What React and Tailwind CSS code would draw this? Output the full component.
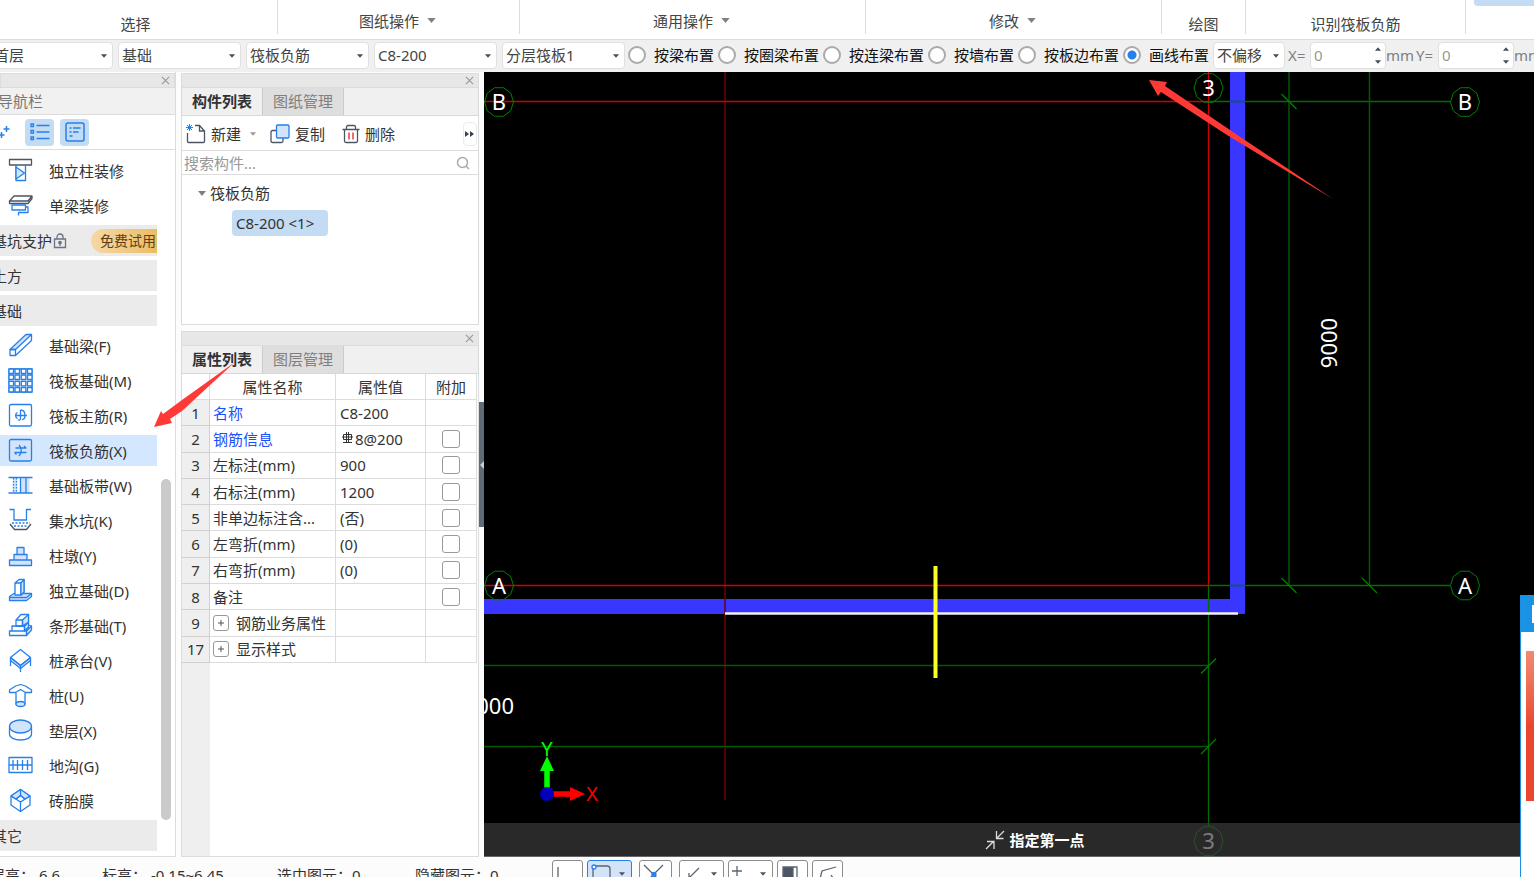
import React, { useState } from 'react';

const RIBBON = [
  { label: '图纸操作', menu: true, width: 'w-[242px]' },
  { label: '通用操作', menu: true, width: 'w-[346px]' },
  { label: '修改', menu: true, width: 'w-[296px]' },
  { label: '绘图', width: 'w-[84px]' },
  { label: '识别筏板负筋', width: 'w-[220px]' },
];

const COMBOS = [
  { name: '楼层', value: '首层' },
  { name: '构件大类', value: '基础' },
  { name: '构件类型', value: '筏板负筋' },
  { name: '构件名称', value: 'C8-200' },
  { name: '分层', value: '分层筏板1' },
];

const LAYOUT_MODES = ['按梁布置', '按圈梁布置', '按连梁布置', '按墙布置', '按板边布置', '画线布置'];

const NAV = [
  { type: 'item', label: '独立柱装修', icon: 'columnFinish' },
  { type: 'item', label: '单梁装修', icon: 'beamFinish' },
  { type: 'group', label: '基坑支护', trial: true },
  { type: 'group', label: '土方' },
  { type: 'group', label: '基础' },
  { type: 'item', label: '基础梁(F)', icon: 'beam' },
  { type: 'item', label: '筏板基础(M)', icon: 'raft' },
  { type: 'item', label: '筏板主筋(R)', icon: 'mainBar' },
  { type: 'item', label: '筏板负筋(X)', icon: 'negBar' },
  { type: 'item', label: '基础板带(W)', icon: 'strip' },
  { type: 'item', label: '集水坑(K)', icon: 'sump' },
  { type: 'item', label: '柱墩(Y)', icon: 'pier' },
  { type: 'item', label: '独立基础(D)', icon: 'pad' },
  { type: 'item', label: '条形基础(T)', icon: 'stripFooting' },
  { type: 'item', label: '桩承台(V)', icon: 'pileCap' },
  { type: 'item', label: '桩(U)', icon: 'pile' },
  { type: 'item', label: '垫层(X)', icon: 'cushion' },
  { type: 'item', label: '地沟(G)', icon: 'trench' },
  { type: 'item', label: '砖胎膜', icon: 'brick' },
  { type: 'group', label: '其它' },
];

const PROPS = [
  { no: 1, name: '名称', value: 'C8-200', key: true },
  { no: 2, name: '钢筋信息', value: '8@200', key: true, rebar: true, extra: true },
  { no: 3, name: '左标注(mm)', value: '900', extra: true },
  { no: 4, name: '右标注(mm)', value: '1200', extra: true },
  { no: 5, name: '非单边标注含...', value: '(否)', extra: true },
  { no: 6, name: '左弯折(mm)', value: '(0)', extra: true },
  { no: 7, name: '右弯折(mm)', value: '(0)', extra: true },
  { no: 8, name: '备注', value: '', extra: true },
  { no: 9, name: '钢筋业务属性', value: '', expand: true },
  { no: 17, name: '显示样式', value: '', expand: true },
];

const G = '#4b5563';
const F = '#d3e4fa';

const ICONS = {
  columnFinish: (
    <>
      <path d="M1.5 1.5h22v5.5h-22z" stroke={G} />
      <path d="M8 7v15.5h9.5V7" />
      <path d="M8 9l8.5 6L8 21z" fill={F} />
    </>
  ),
  beamFinish: (
    <>
      <path d="M1.5 8L6 3h18l-4 5zM1.5 8v2.5H20L24 5.5V3" stroke={G} />
      <path d="M4 12h13.5v5H4zM17.5 14H20v5.5h-9.5v3" />
    </>
  ),
  beam: (
    <>
      <path d="M2 16.5L18 1.5h5.5L7.5 16.5z" fill={F} />
      <path d="M2 16.5h5.5v6H2zM23.5 1.5v6l-16 15" />
    </>
  ),
  raft: (
    <>
      <path d="M1 1h23v23H1z" fill={F} />
      {[1, 7, 13.3, 19.5].map((y) =>
        [1, 7, 13.3, 19.5].map((x) => <rect key={`${x}-${y}`} x={x} y={y} width="4.5" height="4.5" fill="#fff" />)
      )}
    </>
  ),
  mainBar: (
    <>
      <rect x="1.5" y="1.5" width="22" height="21.5" rx="1.5" />
      <path d="M12.5 7v8.500c0 2-2 2-2.500 1M7 12.500h12M9.500 9.500c-2.500 1-2.500 5 0 6M12.500 7c3 0 4.500 2 4.500 5.500s-1.500 4-3 4" />
    </>
  ),
  negBar: (
    <>
      <rect x="1.5" y="1.5" width="22" height="21.5" rx="1.5" fill={F} />
      <path d="M7.500 10H18l-2-2M6.500 14.500h12M6.500 14.500l2 2M11 7c3 3 3 8 0 11" />
    </>
  ),
  strip: (
    <>
      <path d="M13 5h8.5v15H13zM5 5h4v15H5z" fill={F} stroke="none" />
      <path d="M.5 4.5h24M.5 20h24M12.500 4.5V20M18 4.500V20" />
      <path d="M5.500 5v15M8.500 5v15" strokeDasharray="1.5 1.5" />
    </>
  ),
  sump: (
    <>
      <path d="M1.5 1.5H6V12h12.5V1.5H23" />
      <path d="M4 15h18M6 18h14" strokeDasharray="2 1.5" />
      <path d="M2 16l4.5 5.5h12L23 16" stroke={G} />
    </>
  ),
  pier: <path d="M1.5 17h22v5.5h-22zM6 11.5h13V17H6zM9 4.5h7v7H9z" fill={F} />,
  pad: (
    <>
      <path d="M1.5 18.5L6 15.5h17.5v3l-5 4h-17z" fill={F} />
      <path d="M7 17V5l4-3.500h5V14l-3 3zM7 5h6v12" fill="#fff" />
      <path d="M13 5l3-3.500V14l-3 3z" fill={F} />
      <path d="M1.5 19.5h17l5-4" />
    </>
  ),
  stripFooting: (
    <>
      <path d="M18.500 18l5-5v4l-5 5.500zM16.500 13l4-4v5l-4 4z" fill={F} />
      <path d="M1.5 18h17v4.5h-17zM4 13h12.500v5H4z" />
      <path d="M8 13V7l5-5.500h7.500V9l-4 4z" />
      <path d="M14.500 7l6-5.500V9l-6 4z" fill={F} />
      <path d="M8 7h6.500v6M20.500 12l3 1" />
    </>
  ),
  pileCap: (
    <>
      <path d="M2.5 9.5v3l10 8 10-8v-3l-10 8z" fill={F} />
      <path d="M12.500 1.500l10 8-10 8-10-8zM2.500 12v6M22.500 12v6M12.500 18v6" />
    </>
  ),
  pile: (
    <>
      <path d="M1.5 7l6-4 5-1.500 5 1.500 6 4v2.500h-6l-5-3-5 3h-6zM8 10v11.500M17 10v11.500" />
      <ellipse cx="12.5" cy="21" rx="4.5" ry="2.5" fill={F} />
    </>
  ),
  cushion: (
    <>
      <path d="M1.5 9v7c0 3.5 5 6 11 6s11-2.5 11-6V9" />
      <ellipse cx="12.5" cy="8.5" rx="11" ry="6.5" fill={F} />
    </>
  ),
  trench: <path d="M1 4.5h23v15H1zM5 7v10M9.500 7v10M14.500 7v10M19.500 7v10M1 12h23" />,
  brick: (
    <>
      <path d="M12.5 1.5l9.500 6.500v9l-9.500 6.500L3 17V8z" />
      <path d="M12.500 1.500L3 8l5 3 4.500-3.500 4.500 3.500 5-3z" fill={F} />
      <path d="M8 11l4.500-3.500L17 11l-4.500 3zM3 8l9.500 6L22 8M12.500 14v9.500M12.500 1.500v6" />
    </>
  ),
};

function NavIcon({ name }) {
  return (
    <svg viewBox="0 0 25 25" className="h-[25px] w-[25px] shrink-0" fill="none" stroke="#2680eb" strokeWidth="1.3" strokeLinejoin="round">
      {ICONS[name]}
    </svg>
  );
}

function Caret({ className }) {
  return (
    <svg viewBox="0 0 10 6" className={className} fill="currentColor" aria-hidden="true">
      <path d="M0 0h10L5 6z" />
    </svg>
  );
}

function Combo({ name, value, width }) {
  return (
    <div className={`relative shrink-0 ${width}`}>
      <select
        aria-label={name}
        defaultValue={value}
        className="h-[27px] w-full appearance-none rounded border border-[#e0e0e0] bg-white pl-[3px] text-[15px] leading-[25px] text-[#444] outline-none"
      >
        <option>{value}</option>
      </select>
      <Caret className="pointer-events-none absolute top-[12px] right-[6px] h-1 w-[6px] text-[#444b59]" />
    </div>
  );
}

function Offset({ axis }) {
  return (
    <label className="flex shrink-0 items-center text-[#808080]">
      <span className="w-[22px]">{axis}=</span>
      <span className="relative">
        <input
          type="text"
          defaultValue="0"
          className="h-[27px] w-[76px] rounded border border-[#e0e0e0] bg-white pl-[3px] text-[15px] text-[#999] outline-none"
        />
        <Caret className="absolute top-[5px] right-[5px] h-1 w-[6px] rotate-180 text-[#444b59]" />
        <Caret className="absolute right-[5px] bottom-[5px] h-1 w-[6px] text-[#444b59]" />
      </span>
      <span className="w-[30px]">mm</span>
    </label>
  );
}

function Ribbon() {
  return (
    <header className="relative flex h-10 shrink-0 border-b border-[#dcdcdc] bg-white text-[#444]">
      <div className="-ml-[6px] flex h-[34px] w-[284px] shrink-0 items-end justify-center border-r border-[#dcdcdc] leading-5">选择</div>
      {RIBBON.map((g) => (
        <div key={g.label} className={`flex h-[34px] shrink-0 justify-center border-r border-[#dcdcdc] leading-5 ${g.width} ${g.menu ? 'items-center pt-[7px] pr-[2px]' : 'items-end'}`}>
          {g.menu ? (
            <button className="flex items-center gap-2">
              {g.label}
              <Caret className="h-[5px] w-[9px] text-[#808080]" />
            </button>
          ) : (
            g.label
          )}
        </div>
      ))}
      <div className="ml-2 h-[6px] grow rounded-bl bg-[#c3dbf3]" />
    </header>
  );
}

function OptionsBar() {
  const [mode, setMode] = useState('画线布置');
  return (
    <div className="flex h-8 shrink-0 items-center overflow-hidden bg-[#f0f0f0] pb-[2px]">
      <div className="-ml-[10px] flex gap-[5px]">
        {COMBOS.map((c) => (
          <Combo key={c.name} {...c} width="w-[123px]" />
        ))}
      </div>
      <div className="ml-[3px] flex gap-1 pr-1">
        {LAYOUT_MODES.map((m) => (
          <label key={m} className="flex shrink-0 items-center gap-2 text-[#111]">
            <input
              type="radio"
              name="mode"
              checked={mode === m}
              onChange={() => setMode(m)}
              className="h-[18px] w-[18px] appearance-none rounded-full border-2 border-[#aaa] bg-white checked:bg-[radial-gradient(circle,#2680eb_4px,#fff_5px)]"
            />
            {m}
          </label>
        ))}
      </div>
      <Combo name="偏移方式" value="不偏移" width="w-[72px]" />
      <div className="ml-[3px] flex">
        <Offset axis="X" />
        <Offset axis="Y" />
      </div>
    </div>
  );
}

function CloseStrip() {
  return (
    <div className="flex h-[15px] shrink-0 items-center justify-end border border-[#dcdcdc] bg-[#e7e7e7] pr-1">
      <button aria-label="关闭">
        <svg viewBox="0 0 10 10" className="h-[9px] w-[9px]" stroke="#999" strokeWidth="1.3">
          <path d="M1 1l8 8M9 1L1 9" />
        </svg>
      </button>
    </div>
  );
}

function Navigator() {
  const [active, setActive] = useState('negBar');
  return (
    <nav className="flex w-[176px] shrink-0 flex-col border-r border-b border-[#dcdcdc] bg-white pt-px">
      <CloseStrip />
      <h2 className="-ml-px h-[27px] shrink-0 border-b border-[#dcdcdc] bg-[#f1f1f1] leading-[26px] text-[#777]">
        <span className="-ml-px">导航栏</span>
      </h2>
      <div className="flex h-[35px] shrink-0 items-center gap-[6px] border-b border-[#dcdcdc]">
        <button aria-label="添加" className="w-[19px]">
          <svg viewBox="0 0 19 24" className="h-6 w-[19px]" stroke="#2680eb" strokeWidth="1.5">
            <path d="M6.5 6v6M3.5 9h6M1.5 12v6M-1.5 15h6" />
          </svg>
        </button>
        <button aria-label="列表" className="flex h-[27px] w-[29px] items-center justify-center rounded bg-[#c3dbf3]">
          <svg viewBox="0 0 20 18" className="h-[18px] w-5" fill="none" stroke="#2680eb" strokeWidth="1.3">
            <path d="M6.500 2.500h13M6.500 9h13M6.500 15.500h13M1 1h2.500v2.500H1zM1 7.500h2.500V10H1zM1 14h2.500v2.500H1z" />
          </svg>
        </button>
        <button aria-label="图标" className="flex h-[27px] w-[29px] items-center justify-center rounded bg-[#c3dbf3]">
          <svg viewBox="0 0 20 20" className="h-5 w-5" fill="none" stroke="#2680eb" strokeWidth="1.5">
            <rect x="1" y="1" width="18" height="18" rx="2" />
            <path d="M4.500 6h2M8 6h7.500M4.500 10h2M8 10h5.500M4.500 14h3" />
          </svg>
        </button>
      </div>
      <div className="flex min-h-0 grow justify-between overflow-hidden pt-[5px]">
        <ul className="flex w-[157px] flex-col gap-1">
          {NAV.map((n) =>
            n.type === 'group' ? (
              <li key={n.label} className="flex h-[31px] shrink-0 items-center overflow-hidden bg-[#ebebeb] text-[#333]">
                <span className="-ml-2 shrink-0">{n.label}</span>
                {n.trial && (
                  <>
                    <svg viewBox="0 0 14 16" className="ml-px h-4 w-[14px] shrink-0" fill="none" stroke="#6b7280" strokeWidth="1.3">
                      <path d="M1.5 6h11v8.5h-11zM4 6V4a3 3 0 016 0v2M7 11v2" />
                      <circle cx="7" cy="9.5" r="1.2" fill="#6b7280" />
                    </svg>
                    <span className="ml-6 h-6 grow rounded-l-full bg-linear-to-r from-[#f5d8a8] to-[#ebbd62] pl-[9px] text-[14px] leading-6 whitespace-nowrap text-[#5e3f14]">
                      免费试用
                    </span>
                  </>
                )}
              </li>
            ) : (
              <li key={n.label} className="shrink-0">
                <button
                  onClick={() => setActive(n.icon)}
                  className={`flex h-[31px] w-full items-center gap-4 pl-2 text-[#333] ${active === n.icon ? 'bg-[#d3e7ff]' : ''}`}
                >
                  <NavIcon name={n.icon} />
                  {n.label}
                </button>
              </li>
            )
          )}
        </ul>
        <div className="mr-1 flex w-[10px] flex-col justify-end pb-[36px]">
          <div className="h-[341px] rounded-full bg-[#cacaca]" />
        </div>
      </div>
    </nav>
  );
}

function Tabs({ items }) {
  return (
    <div className="flex h-7 shrink-0 border-x border-b border-[#d5d8dc] bg-[#f0f0f0]" role="tablist">
      {items.map((t, i) => (
        <button
          key={t}
          role="tab"
          aria-selected={i === 0}
          className={`w-[81px] border-r border-[#c9cdd2] pb-px text-center ${i === 0 ? 'bg-[#f0f0f0] font-bold text-[#333]' : 'bg-[#dedede] text-[#808080]'}`}
        >
          {t}
        </button>
      ))}
    </div>
  );
}

function ComponentPanel() {
  return (
    <section className="flex h-[252px] shrink-0 flex-col border-b border-[#dcdcdc] bg-white">
      <CloseStrip />
      <Tabs items={['构件列表', '图纸管理']} />
      <div className="flex h-[35px] shrink-0 items-center border-x border-b border-[#dcdcdc] pt-px pl-1 text-[#333]">
        <button className="flex items-center gap-[5px]">
          <svg viewBox="0 0 20 20" className="h-5 w-5" fill="none" stroke="#4b5563" strokeWidth="1.3">
            <path d="M1.5 9v8.5a1 1 0 001 1h15a1 1 0 001-1V7l-5-5.500H9M13.500 1.500V7h5" />
            <path d="M1 1l5 5M6 1L1 6M3.500 0v7M0 3.500h7" stroke="#2680eb" strokeWidth="1" />
          </svg>
          新建
        </button>
        <Caret className="ml-[9px] h-1 w-[6px] text-[#999]" />
        <button className="ml-[14px] flex items-center gap-[5px]">
          <svg viewBox="0 0 20 20" className="h-5 w-5" fill="none" strokeWidth="1.3">
            <rect x="1" y="6.5" width="12" height="12" rx="1.5" stroke="#4b5563" />
            <rect x="6.5" y="1" width="12.5" height="13" rx="1" stroke="#2680eb" fill={F} />
          </svg>
          复制
        </button>
        <button className="ml-[17px] flex items-center gap-[5px]">
          <svg viewBox="0 0 18 20" className="h-5 w-[18px]" fill="none" stroke="#4b5563" strokeWidth="1.3">
            <path d="M.5 5.5h17M2.5 5.5v11.500a1.500 1.500 0 001.500 1.500h10a1.500 1.500 0 001.500-1.500V5.500M4.500 5.500V3a1.500 1.500 0 011.500-1.500h6A1.500 1.500 0 0113.500 3v2.500" />
            <path d="M7 8.500v7M11 8.500v7" stroke="#e02020" />
          </svg>
          删除
        </button>
        <button aria-label="更多" className="mr-px ml-auto flex h-6 w-[14px] items-center justify-center rounded border border-[#ececec]">
          <svg viewBox="0 0 10 6" className="h-[6px] w-[10px] shrink-0" fill="#374151">
            <path d="M0 0l4 3-4 3zM5 0l4 3-4 3z" />
          </svg>
        </button>
      </div>
      <div className="flex h-6 shrink-0 items-center border-x border-b border-[#dcdcdc] pr-2 pl-[2px]">
        <input type="search" aria-label="搜索构件" placeholder="搜索构件..." className="w-0 grow text-[15px] leading-5 outline-none placeholder:text-[#999]" />
        <svg viewBox="0 0 14 14" className="h-[14px] w-[14px]" fill="none" stroke="#aaa" strokeWidth="1.5">
          <circle cx="6.5" cy="6.5" r="5" />
          <path d="M10 10l3 3" />
        </svg>
      </div>
      <ul className="grow border-x border-[#dcdcdc] pt-[7px] text-[#333]">
        <li>
          <div className="flex h-[22px] items-center gap-1 pl-4">
            <Caret className="h-[5px] w-[8px] text-[#808080]" />
            筏板负筋
          </div>
          <ul className="pt-[6px] pl-[50px]">
            <li className="h-[26px] w-24 rounded bg-[#c3dbf3] pl-1 leading-[26px]">{'C8-200 <1>'}</li>
          </ul>
        </li>
      </ul>
    </section>
  );
}

function PropertyPanel() {
  return (
    <section className="flex min-h-0 grow flex-col border-b border-[#dcdcdc] bg-white">
      <CloseStrip />
      <Tabs items={['属性列表', '图层管理']} />
      <div className="flex min-h-0 grow flex-col border-x border-[#dcdcdc] pr-px">
        <table className="h-[289px] w-full shrink-0 table-fixed border-separate border-spacing-0 text-[#333]">
          <thead>
            <tr className="h-[26px]">
              <th className="w-7 border-r border-b border-[#dcdcdc]" />
              <th className="border-r border-b border-[#dcdcdc] p-0 font-normal">属性名称</th>
              <th className="w-[90px] border-r border-b border-[#dcdcdc] p-0 font-normal">属性值</th>
              <th className="w-[51px] border-r border-b border-[#dcdcdc] p-0 font-normal">附加</th>
            </tr>
          </thead>
          <tbody>
            {PROPS.map((p) => (
              <tr key={p.no} className="h-[26px]">
                <td className="border-r border-b border-[#d0d0d0] bg-[#efefef] p-0 text-center">{p.no}</td>
                <td className={`border-r border-b border-[#dcdcdc] p-0 pl-[3px] ${p.key ? 'text-[#1a50ff]' : ''}`}>
                  <div className="flex items-center gap-[7px]">
                    {p.expand && (
                      <button aria-label="展开" className="flex h-4 w-4 items-center justify-center rounded-[3px] border border-[#999]">
                        <svg viewBox="0 0 8 8" className="h-2 w-2 shrink-0" stroke="#555">
                          <path d="M4 1v6M1 4h6" />
                        </svg>
                      </button>
                    )}
                    {p.name}
                  </div>
                </td>
                <td className="border-r border-b border-[#dcdcdc] p-0 pl-1">
                  <div className="flex items-center gap-px">
                    {p.rebar && (
                      <svg viewBox="0 0 14 14" className="h-[14px] w-[14px]" fill="none" stroke="#333">
                        <path d="M3.5 2.500v5M6.500 0v11M8.500 0v11M11.500 2.500v5M3 10.500h9M3.500 2.500h8M3.500 7.500h8M2 5h11" />
                      </svg>
                    )}
                    {p.value}
                  </div>
                </td>
                <td className="border-r border-b border-[#dcdcdc] p-0">
                  {p.extra && (
                    <input type="checkbox" aria-label={`${p.name} 附加`} className="mx-auto block h-[18px] w-[18px] appearance-none rounded-[3px] border border-[#999] bg-white" />
                  )}
                </td>
              </tr>
            ))}
          </tbody>
        </table>
        <div className="w-7 grow bg-[#efefef]" />
      </div>
    </section>
  );
}

function AxisBubble({ x, y, label }) {
  const pts = Array.from({ length: 10 }, (_, i) => {
    const a = (i * Math.PI) / 5;
    return `${x + 14.5 * Math.cos(a)},${y + 15 * Math.sin(a)}`;
  }).join(' ');
  return (
    <g>
      <polygon points={pts} fill="none" stroke="#008000" />
      <text x={x} y={y + 8} fill="#fff" fontSize="22" textAnchor="middle">{label}</text>
    </g>
  );
}

function Drawing() {
  return (
    <svg viewBox="484 72 1050 785" preserveAspectRatio="xMinYMin slice" className="h-full w-full" fill="none">
      {/* walls */}
      <path d="M484 606.5H1237.5V72" stroke="#3936ff" strokeWidth="15" />
      {/* grid lines */}
      <path d="M725 72V800" stroke="#6e0000" strokeWidth="1.5" />
      <path d="M484 101.5H1208.5M1208.5 72V585.5M484 585.5H1208.5" stroke="#d00000" strokeWidth="1.3" />
      <path d="M1208.5 101.5H1450M1208.5 585.5H1450M1208.5 585.5V826" stroke="#006e00" strokeWidth="1.3" />
      {/* dimension lines */}
      <path d="M1289 72V585.5M1369.5 72V585.5M484 665.5H1208.5M484 746.5H1208.5" stroke="#005a00" strokeWidth="1.5" />
      <path d="M1281.5 94l15 15M1281.5 578l15 15M1362 578l15 15M1201 673.500l15-15M1201 754l15-15" stroke="#008000" strokeWidth="1.3" />
      {/* selected edge and negative bar */}
      <path d="M725 613.500H1238" stroke="#f4f0ff" strokeWidth="2.500" />
      <path d="M935.500 566V678" stroke="#ffff28" strokeWidth="4" />
      <AxisBubble x={499} y={102} label="B" />
      <AxisBubble x={1465} y={102} label="B" />
      <AxisBubble x={499} y={585.5} label="A" />
      <AxisBubble x={1465} y={585.5} label="A" />
      <AxisBubble x={1208.5} y={88} label="3" />
      <AxisBubble x={1208.5} y={841} label="3" />
      <text x="514" y="714" fill="#fff" fontSize="22" textAnchor="end">9000</text>
      <text transform="translate(1337 343) rotate(-90)" fill="#fff" fontSize="22" textAnchor="middle">9000</text>
      {/* axes */}
      <path d="M547 790V770" stroke="#0f0" strokeWidth="5.5" />
      <path d="M540 771h14l-7-15z" fill="#0f0" />
      <path d="M550 794h21" stroke="#f00" strokeWidth="5.5" />
      <path d="M570 787v14l15-7z" fill="#f00" />
      <circle cx="547" cy="794" r="7" fill="#0000b8" />
      <text x="547" y="756" fill="#0f0" fontSize="20" textAnchor="middle">Y</text>
      <text x="592" y="801" fill="#f00" fontSize="20" textAnchor="middle">X</text>
      {/* pointer to the active layout mode */}
      <path d="M1149 80l18 2-2 4 68 46 100 67-106-64-66-43-3 4z" fill="#ff3a36" />
    </svg>
  );
}

function Canvas() {
  return (
    <main className="relative min-w-0 grow overflow-hidden border-b border-[#666] bg-black">
      <Drawing />
      <div className="absolute inset-x-0 bottom-0 flex h-[33px] items-center justify-center gap-1 bg-[#3c3c3cae] pl-[52px] font-bold text-white">
        <svg viewBox="0 0 20 20" className="h-5 w-5" fill="none" stroke="#ddd" strokeWidth="1.3">
          <path d="M19 1l-7 7M11.5 1v7.500h7M1 19l8-8M2 11.500h7V19" />
        </svg>
        指定第一点
      </div>
    </main>
  );
}

const SNAPS = [
  { name: '正交', width: 'w-[31px]', d: 'M5 6v16h16' },
  { name: '矩形', width: 'w-[45px]', d: 'M8 5h11a3 3 0 013 3v13M5 8v13', menu: true, on: true },
  { name: '交点', width: 'mx-[3px] w-[33px]', d: 'M4 4l20 20M23 4L4 23' },
  { name: '垂点', width: 'w-[45px]', d: 'M19 7L8 18M9 12v7h7', menu: true },
  { name: '点', width: 'w-[45px]', d: 'M8 5v10M3 10h10', menu: true },
  { name: '填充', width: 'w-[31px]', d: 'M15 6h4v14' },
  { name: '折线', width: 'w-[31px]', d: 'M6 22l3-12 14-4M18 14l4 6' },
];

function StatusBar() {
  return (
    <footer className="flex h-5 shrink-0 overflow-hidden bg-[#fcfcfc] text-[#333]">
      <div className="-ml-[10px] flex h-9 shrink-0 items-center">
        <span className="w-[112px]">层高：&nbsp;6.6</span>
        <span className="w-[175px]">标高：&nbsp;-0.15~6.45</span>
        <span className="w-[138px]">选中图元：0</span>
        <span className="w-[137px]">隐藏图元：0</span>
      </div>
      <div className="flex gap-1 pt-[3px]">
        {SNAPS.map((s) => (
          <button
            key={s.name}
            aria-label={s.name}
            className={`flex h-7 shrink-0 items-center rounded-[3px] border ${s.width} ${s.on ? 'border-[#2680eb] bg-[#d3e4fa]' : 'border-[#8c8c8c] bg-white'}`}
          >
            <svg viewBox="0 0 28 26" className="h-[26px] w-7 shrink-0" fill="none" stroke="#5b6470" strokeWidth="1.3">
              <path d={s.d} />
              {s.name === '矩形' && <circle cx="6" cy="6" r="2" stroke="#2680eb" fill="#fff" />}
              {s.name === '交点' && <circle cx="14" cy="13.5" r="2" stroke="#2680eb" fill="#2680eb" />}
              {s.name === '填充' && <path d="M5 6h10v16H5z" fill="#4b5563" />}
            </svg>
            {s.menu && <Caret className="ml-[3px] h-1 w-[6px] shrink-0 text-[#4b5563]" />}
          </button>
        ))}
      </div>
    </footer>
  );
}

export default function App() {
  return (
    <div className="relative flex h-screen flex-col overflow-hidden bg-[#fcfcfc] font-['Noto_Sans','Noto_Sans_CJK_SC',sans-serif] text-[15px] leading-5 whitespace-nowrap">
      <Ribbon />
      <OptionsBar />
      <div className="flex min-h-0 grow">
        <Navigator />
        <div className="relative ml-[5px] flex w-[298px] shrink-0 flex-col gap-[6px] pt-px">
          <ComponentPanel />
          <PropertyPanel />
        </div>
        <div className="flex w-[5px] shrink-0 flex-col pt-[330px]">
          <button aria-label="收起" className="flex h-[125px] items-center justify-end bg-[#5f6b78]">
            <svg viewBox="0 0 4 8" className="h-2 w-1" fill="#ccc">
              <path d="M4 0v8L0 4z" />
            </svg>
          </button>
        </div>
        <Canvas />
      </div>
      <StatusBar />

      {/* pointer to the active component type */}
      <svg viewBox="0 0 82 66" className="pointer-events-none absolute top-[362px] left-[154px] h-[66px] w-[82px]" fill="#ff3a36">
        <path d="M0 65l7-16 2 3 19-14L81 0 28 49l-12 8 2 4z" />
      </svg>

      {/* docked notification */}
      <aside className="absolute right-0 bottom-0 h-[282px] w-[14px] overflow-hidden border-l border-[#1b8fe0] bg-white">
        <div className="flex h-[37px] items-center justify-end bg-[#1b93e4]">
          <div className="h-[18px] w-[2px] bg-white" />
        </div>
        <div className="mt-[19px] ml-[5px] h-[150px] bg-linear-to-b from-[#f08a72] via-[#e9462f] to-[#e9462f]" />
      </aside>
    </div>
  );
}
